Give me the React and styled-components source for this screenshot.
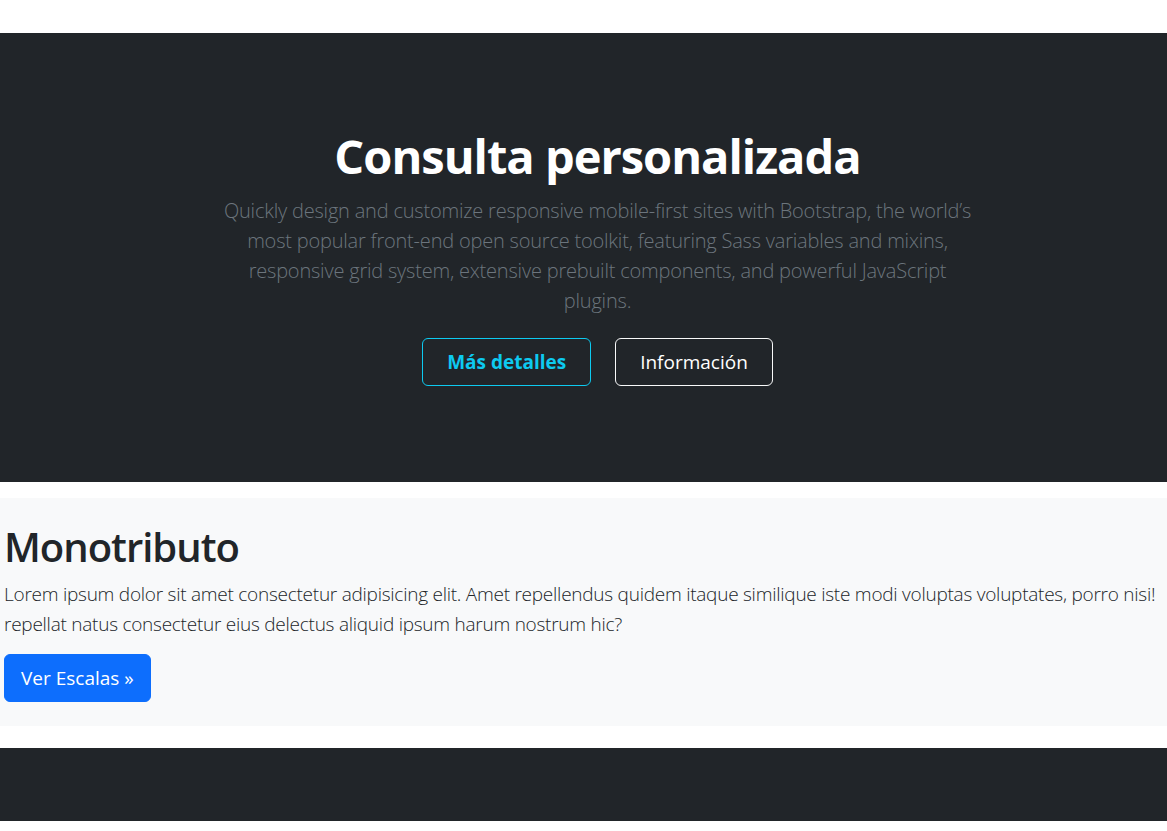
import React from 'react';
import styled, { createGlobalStyle } from 'styled-components';

const GlobalStyle = createGlobalStyle`
  * { box-sizing: border-box; }
  body {
    margin: 0;
    background: #ffffff;
    font-family: 'Open Sans', 'Noto Sans', sans-serif;
    color: #212529;
    overflow-x: hidden;
  }
`;

// the page is a little wider than the window, as in the original
const Page = styled.div`
  width: 1195px;
  padding-top: 33px;
  display: flex;
  flex-direction: column;
`;

const Hero = styled.section`
  background: #212529;
  padding: 95px 0 96px;
  display: flex;
  flex-direction: column;
  align-items: center;
  text-align: center;
`;

const HeroTitle = styled.h1`
  margin: 0 0 12px;
  font-size: 47px;
  line-height: 56px;
  font-weight: 700;
  color: #ffffff;
  letter-spacing: -1px;
`;

const Lead = styled.p`
  margin: 0 0 ${(p) => p.$mb ?? 22}px;
  max-width: ${(p) => p.$max || 'none'};
  font-size: ${(p) => p.$size || 20}px;
  line-height: 30px;
  font-weight: 300;
  letter-spacing: ${(p) => p.$ls ?? -0.2}px;
  color: ${(p) => p.$color || '#6c757d'};
  text-align: ${(p) => p.$align || 'center'};
`;

const ButtonRow = styled.div`
  display: flex;
  gap: 24px;
  justify-content: center;
`;

const Button = styled.button`
  height: 48px;
  padding: 0 ${(p) => (p.$variant === 'primary' ? 16 : 24)}px;
  font-family: inherit;
  font-size: 19px;
  font-weight: ${(p) => (p.$bold ? 700 : 400)};
  border-radius: 6px;
  cursor: pointer;
  background: ${(p) => (p.$variant === 'primary' ? '#0d6efd' : 'transparent')};
  color: ${(p) => (p.$variant === 'info' ? '#0dcaf0' : '#ffffff')};
  border: 1px solid
    ${(p) =>
      p.$variant === 'info'
        ? '#0dcaf0'
        : p.$variant === 'primary'
        ? '#0d6efd'
        : '#f8f9fa'};
`;

const Gap = styled.div`
  height: ${(p) => p.$h}px;
`;

const Feature = styled.section`
  background: #f8f9fa;
  padding: 25px 4px 24px;
  display: flex;
  flex-direction: column;
  align-items: flex-start;
`;

const FeatureTitle = styled.h2`
  margin: 0 0 8px;
  font-size: 40px;
  line-height: 48px;
  font-weight: 600;
  letter-spacing: -1px;
  color: #212529;
`;

const Footer = styled.footer`
  background: #212529;
  height: 73px;
`;

export default function App() {
  return (
    <>
      <GlobalStyle />
      <Page>
        <Hero>
          <HeroTitle>Consulta personalizada</HeroTitle>
          <Lead $max="762px">
            Quickly design and customize responsive mobile-first sites with
            Bootstrap, the world’s most popular front-end open source toolkit,
            featuring Sass variables and mixins, responsive grid system,
            extensive prebuilt components, and powerful JavaScript plugins.
          </Lead>
          <ButtonRow>
            <Button $variant="info" $bold>Más detalles</Button>
            <Button $variant="light">Información</Button>
          </ButtonRow>
        </Hero>
        <Gap $h={16} />
        <Feature>
          <FeatureTitle>Monotributo</FeatureTitle>
          <Lead $color="#212529" $align="left" $mb={15} $size={19} $ls={-0.25} $max="1162px">
            Lorem ipsum dolor sit amet consectetur adipisicing elit. Amet
            repellendus quidem itaque similique iste modi voluptas voluptates,
            porro nisi! repellat natus consectetur eius delectus aliquid ipsum
            harum nostrum hic?
          </Lead>
          <Button $variant="primary">Ver Escalas »</Button>
        </Feature>
        <Gap $h={22} />
        <Footer />
      </Page>
    </>
  );
}
